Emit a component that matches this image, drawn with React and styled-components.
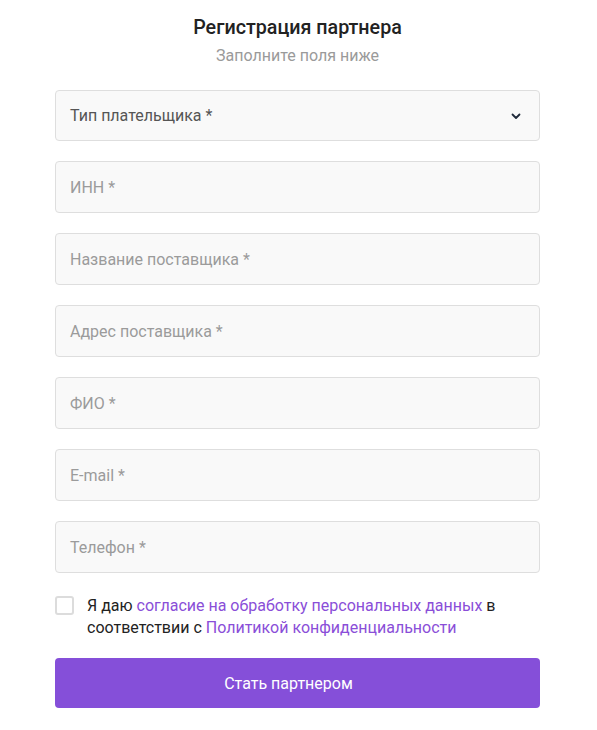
import React from "react";
import styled, { createGlobalStyle } from "styled-components";

const Global = createGlobalStyle`
  html, body { margin: 0; padding: 0; background: #fff; }
  body { font-family: Roboto, "Liberation Sans", Arial, sans-serif; }
  * { box-sizing: border-box; }
`;

const Page = styled.div`
  width: 597px;
  padding: 16px 57px 0 55px;
`;

const Title = styled.h1`
  margin: 0;
  text-align: center;
  font-size: 19.7px;
  font-weight: 500;
  line-height: 24px;
  color: #222;
`;

const Subtitle = styled.p`
  margin: 5px 0 0;
  text-align: center;
  font-size: 16px;
  line-height: 22px;
  color: #9a9a9a;
`;

const Form = styled.form`
  margin-top: 23px;
  display: flex;
  flex-direction: column;
  gap: 20px;
`;

const Field = styled.div`
  position: relative;
  height: ${(p) => (p.$select ? 51 : 52)}px;
  background: #f9f9f9;
  border: 1px solid #dedede;
  border-radius: 4px;
  display: flex;
  align-items: center;
  padding: 0 14px;
  font-size: 16px;
  color: ${(p) => (p.$select ? "#555" : "#9b9b9b")};
`;

const Chevron = styled.svg`
  margin-left: auto;
  margin-right: 4px;
  width: 10px;
  height: 10px;
`;

const Consent = styled.div`
  display: flex;
  gap: 13px;
  align-items: flex-start;
  padding-top: 2px;
  margin-bottom: -1px;
`;

const Box = styled.span`
  flex: none;
  width: 19px;
  height: 19px;
  margin-top: 1px;
  border: 2px solid #dcdcdc;
  border-radius: 3px;
  background: #fff;
`;

const ConsentText = styled.p`
  margin: 0;
  font-size: 16px;
  line-height: 22px;
  color: #222;
`;

const Link = styled.a`
  color: #8a4ed8;
  text-decoration: none;
`;

const Button = styled.button`
  height: 50px;
  padding: 0 18px 0 0;
  border: none;
  border-radius: 4px;
  background: #854fd9;
  color: #fff;
  font-family: inherit;
  font-size: 16px;
`;

const fields = ["ИНН *", "Название поставщика *", "Адрес поставщика *", "ФИО *", "E-mail *", "Телефон *"];

export default function App() {
  return (
    <>
      <Global />
      <Page>
        <Title>Регистрация партнера</Title>
        <Subtitle>Заполните поля ниже</Subtitle>
        <Form onSubmit={(e) => e.preventDefault()}>
          <Field $select>
            Тип плательщика *
            <Chevron viewBox="0 0 10 10">
              <path d="M1.5 3.5 L5 7 L8.5 3.5" fill="none" stroke="#1f2a3a" strokeWidth="1.8" strokeLinecap="round" strokeLinejoin="round" />
            </Chevron>
          </Field>
          {fields.map((f) => (
            <Field key={f}>{f}</Field>
          ))}
          <Consent>
            <Box />
            <ConsentText>
              Я даю <Link href="#">согласие на обработку персональных данных</Link> в соответствии с{" "}
              <Link href="#">Политикой конфиденциальности</Link>
            </ConsentText>
          </Consent>
          <Button type="submit">Стать партнером</Button>
        </Form>
      </Page>
    </>
  );
}
